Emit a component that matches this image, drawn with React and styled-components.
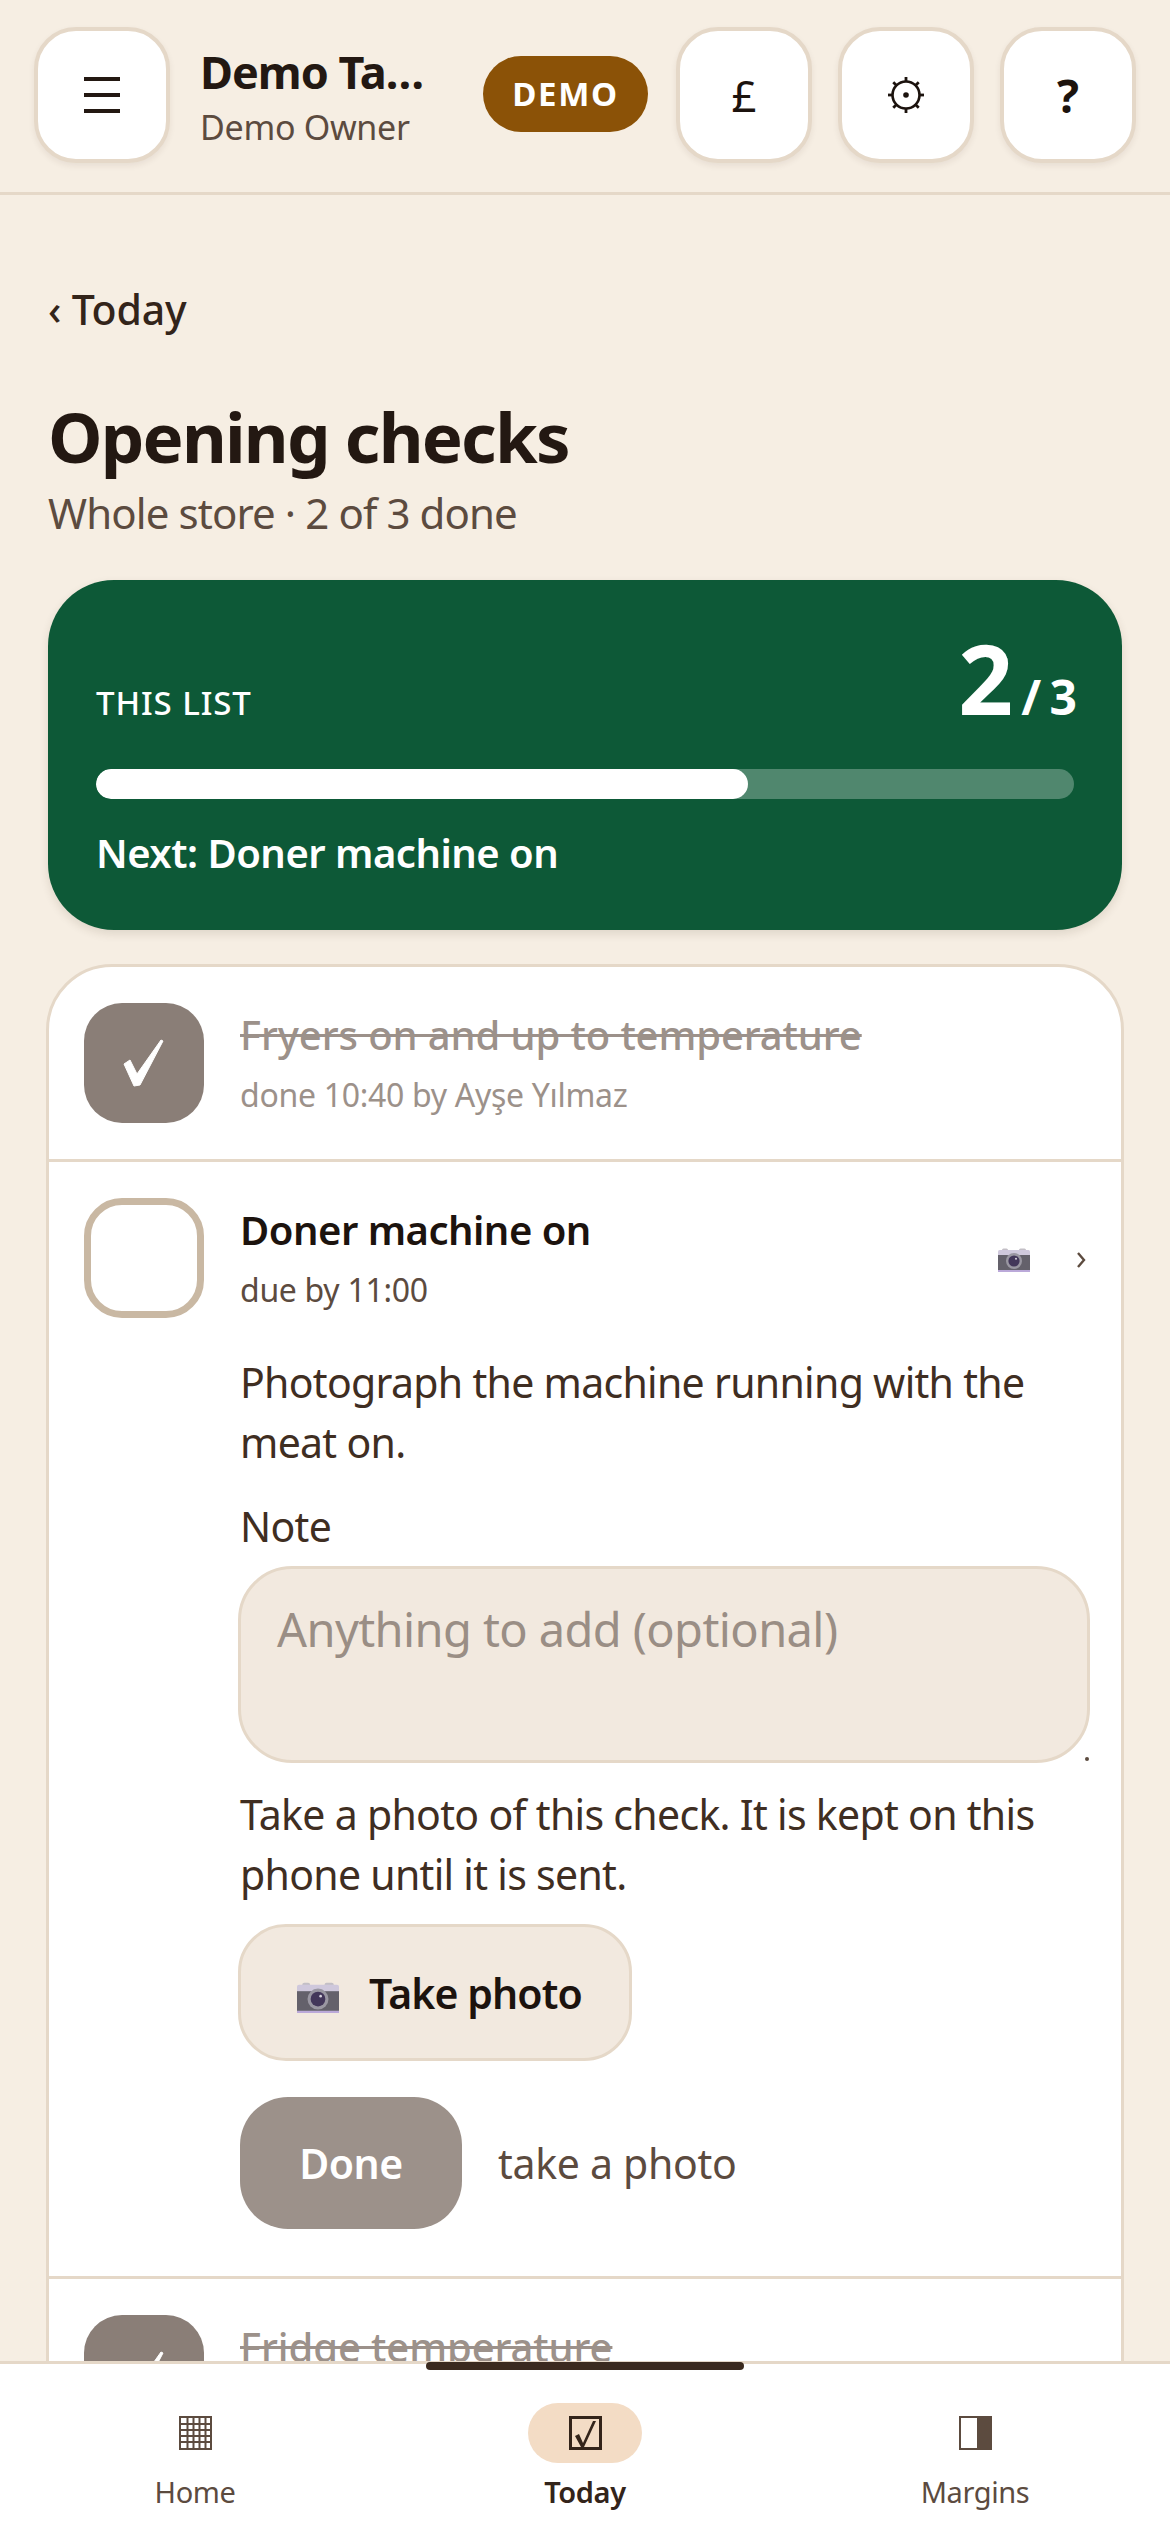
import styled, { createGlobalStyle } from "styled-components"

const GlobalStyle = createGlobalStyle`
html, body {
  margin: 0;
  padding: 0;
  background: #f6eee3;
}
* { box-sizing: border-box; }
body {
  font-family: "Noto Sans", "Open Sans", sans-serif;
  color: #231812;
  overflow: hidden;
}
`

const Screen = styled.div`
height: 2532px;
width: 1170px;
display: flex;
flex-direction: column;
overflow: hidden;
`
const Header = styled.header`
flex: none;
height: 195px;
display: flex;
align-items: center;
padding: 0 34px 2px 34px;
border-bottom: 3px solid #e5d8c8;
`
const IconButton = styled.div`
flex: none;
width: 136px;
height: 136px;
margin-left: ${props => props.gap || 0}px;
background: #fff;
border: 4px solid #e5d8c8;
border-radius: 42px;
box-shadow: 0 3px 6px rgba(60, 40, 20, 0.08);
display: flex;
align-items: center;
justify-content: center;
font-size: ${props => props.size || 48}px;
font-weight: ${props => props.weight || 400};
color: #1c130e;
`
const Brand = styled.div`
flex: 1;
min-width: 0;
margin: 2px 54px 0 30px;
`
const BrandName = styled.div`
font-size: 45px;
line-height: 60px;
font-weight: 700;
letter-spacing: -1px;
white-space: nowrap;
overflow: hidden;
text-overflow: ellipsis;
`
const BrandOwner = styled.div`
margin-top: 2px;
font-size: 34px;
line-height: 46px;
color: #5c4b3f;
letter-spacing: -0.3px;
`
const Badge = styled.div`
flex: none;
width: 165px;
height: 76px;
margin-bottom: 3px;
border-radius: 38px;
background: #8b5207;
color: #fff;
font-size: 33px;
font-weight: 700;
letter-spacing: 1.6px;
display: flex;
align-items: center;
justify-content: center;
`
const Main = styled.main`
flex: 1;
min-height: 0;
overflow: hidden;
padding: 84px 48px 0;
`
const Back = styled.div`
font-size: 41px;
line-height: 60px;
font-weight: 500;
color: #33241a;
letter-spacing: -0.2px;
`
const Title = styled.h1`
margin: 53px 0 0;
font-size: 69px;
line-height: 88px;
font-weight: 700;
letter-spacing: -1.8px;
color: #231812;
`
const Subtitle = styled.div`
margin-top: 3px;
font-size: 42px;
line-height: 60px;
color: #5c4b3f;
letter-spacing: -0.9px;
`
const Summary = styled.section`
margin-top: 37px;
height: 350px;
border-radius: 66px;
background: #0d5937;
color: #fff;
padding: 30px 48px 0;
box-shadow: 0 4px 10px rgba(60, 40, 20, 0.12);
`
const SummaryTop = styled.div`
height: 126px;
display: flex;
align-items: flex-end;
justify-content: space-between;
`
const SummaryLabel = styled.div`
padding-bottom: 8px;
font-size: 33px;
line-height: 50px;
font-weight: 500;
letter-spacing: 0.9px;
`
const Count = styled.div`
margin-right: -3px;
font-size: 48px;
line-height: 78px;
font-weight: 700;
white-space: nowrap;
word-spacing: -4px;
`
const CountBig = styled.span`
font-size: 96px;
margin-right: 8px;
`
const Track = styled.div`
margin-top: 33px;
height: 30px;
border-radius: 15px;
background: rgba(255, 255, 255, 0.28);
overflow: hidden;
`
const Fill = styled.div`
height: 100%;
border-radius: 15px;
background: #fff;
`
const NextUp = styled.div`
margin-top: 24px;
font-size: 40px;
line-height: 60px;
font-weight: 600;
letter-spacing: -0.5px;
`
const ListCard = styled.section`
margin: 34px -2px 0;
background: #fff;
border: 3px solid #e5d8c8;
border-radius: 66px 66px 0 0;
`
const Row = styled.div`
display: flex;
gap: 36px;
padding: 36px 33px ${props => (props.tall ? 47 : 36)}px 35px;
border-bottom: ${props => (props.last ? "none" : "3px solid #e5d8c8")};
`
const Box = styled.div`
flex: none;
width: 120px;
height: 120px;
border-radius: 38px;
display: flex;
align-items: center;
justify-content: center;
background: ${props => (props.done ? "#8a7e77" : "#fff")};
border: ${props => (props.done ? "none" : "7px solid #c9b8a3")};
`
const RowBody = styled.div`
flex: 1;
min-width: 0;
`
const RowHead = styled.div`
display: flex;
align-items: center;
`
const RowText = styled.div`
flex: 1;
min-width: 0;
`
const RowTitle = styled.div`
padding-top: 4px;
font-size: 40px;
line-height: 56px;
font-weight: ${props => (props.done ? 500 : 600)};
letter-spacing: ${props => (props.done ? -0.1 : -0.5)}px;
color: ${props => (props.done ? "#9c918a" : "#1c130e")};
text-decoration: ${props => (props.done ? "line-through" : "none")};
text-decoration-thickness: 3px;
`
const RowMeta = styled.div`
margin-top: 8px;
font-size: 32px;
line-height: 48px;
letter-spacing: -0.3px;
color: ${props => (props.done ? "#9c918a" : "#5c4b3f")};
`
const RowGlyphs = styled.div`
display: flex;
align-items: center;
margin-top: 8px;
`
const Chevron = styled.span`
margin-left: 46px;
margin-right: 2px;
display: flex;
`
const Copy = styled.p`
margin: ${props => props.top || 0}px 0 0;
font-size: 41px;
line-height: 60px;
letter-spacing: -0.7px;
color: #3f2e22;
`
const NoteWrap = styled.div`
position: relative;
margin: 10px -2px 0;
`
const NoteBox = styled.div`
height: 197px;
padding: 28px 36px;
background: #f2e9df;
border: 3px solid #e5d8c8;
border-radius: 54px;
font-size: 47px;
line-height: 64px;
letter-spacing: -0.6px;
color: #9a8e85;
`
const Grip = styled.div`
position: absolute;
right: 1px;
bottom: 2px;
width: 4px;
height: 4px;
border-radius: 50%;
background: #5c4b3f;
`
const PhotoButton = styled.div`
margin: 20px 0 0 -2px;
width: 394px;
height: 137px;
display: flex;
align-items: center;
gap: 30px;
padding-left: 56px;
background: #f2e9df;
border: 3px solid #e5d8c8;
border-radius: 48px;
font-size: 41px;
font-weight: 600;
letter-spacing: -0.9px;
color: #1c130e;
`
const PhotoGlyph = styled.span`
display: flex;
margin-top: 10px;
`
const DoneRow = styled.div`
margin-top: 36px;
display: flex;
align-items: center;
gap: 36px;
`
const DoneButton = styled.div`
width: 222px;
height: 132px;
border-radius: 48px;
background: #9c918a;
color: #fff;
font-size: 41px;
font-weight: 600;
letter-spacing: -0.5px;
display: flex;
align-items: center;
justify-content: center;
`
const DoneHint = styled.div`
font-size: 41px;
letter-spacing: -0.3px;
color: #5c4b3f;
`
const Nav = styled.nav`
flex: none;
position: relative;
height: 171px;
background: #fff;
border-top: 3px solid #e5d8c8;
display: grid;
grid-template-columns: repeat(3, 1fr);
`
const HomeBar = styled.div`
position: absolute;
top: -2px;
left: 426px;
width: 318px;
height: 8px;
border-radius: 4px;
background: #3a2a1f;
`
const Tab = styled.div`
display: flex;
flex-direction: column;
align-items: center;
padding-top: 39px;
color: ${props => (props.active ? "#33241a" : "#5c4b3f")};
`
const TabIcon = styled.div`
width: 114px;
height: 60px;
border-radius: 30px;
display: flex;
align-items: center;
justify-content: center;
background: ${props => (props.active ? "#f3dcc5" : "transparent")};
`
const TabLabel = styled.div`
margin-top: 8px;
font-size: 29px;
line-height: 42px;
font-weight: ${props => (props.active ? 600 : 400)};
letter-spacing: -0.4px;
`

function Camera({ w = 32 }) {
    return (
        <svg width={w} height={w * 0.75} viewBox="0 0 32 24">
            <rect x="4" y="0.5" width="6" height="3" rx="1.5" fill="#c3bfc6" />
            <rect x="21" y="0.5" width="7" height="3" rx="1.5" fill="#c3bfc6" />
            <rect x="0" y="2" width="32" height="22" rx="1.5" fill="#cfc8dc" />
            <rect x="0" y="7" width="32" height="15" fill="#64616b" />
            <rect x="0" y="22" width="32" height="2" fill="#bba9d9" />
            <circle cx="16" cy="13" r="8" fill="#9a97a2" />
            <circle cx="16" cy="13" r="5.6" fill="#43375a" />
            <circle cx="18" cy="10.8" r="1" fill="#d8d4e0" />
        </svg>
    )
}

function Tick() {
    return (
        <svg width="44" height="50" viewBox="0 0 44 50">
            <path d="M2 26 L8 22 L15 36 L39 2 L41 3 L18 47 L12 48Z" fill="#fff" stroke="#fff" strokeWidth="1" strokeLinejoin="round" />
        </svg>
    )
}

function Menu() {
    return (
        <svg width="36" height="36" viewBox="0 0 36 36">
            <path d="M0 2h36M0 18h36M0 34h36" stroke="#231812" strokeWidth="4" />
        </svg>
    )
}

function Gear() {
    const teeth = [0, 45, 90, 135, 180, 225, 270, 315]
    return (
        <svg width="38" height="38" viewBox="0 0 38 38">
            <circle cx="19" cy="19" r="13.5" fill="none" stroke="#1c130e" strokeWidth="2.6" />
            <circle cx="19" cy="19" r="2.8" fill="#1c130e" />
            {teeth.map(a => (
                <rect key={a} x="17.6" y="1" width="2.8" height="5" fill="#1c130e" transform={`rotate(${a} 19 19)`} />
            ))}
        </svg>
    )
}

function GridIcon() {
    const lines = [7, 13, 19, 25]
    return (
        <svg width="33" height="34" viewBox="0 0 33 34">
            <rect x="1" y="1" width="31" height="32" fill="#fff" stroke="#5c4b3f" strokeWidth="2" />
            {lines.map(v => <rect key={"v" + v} x={v + 0.5} y="1" width="2" height="32" fill="#5c4b3f" />)}
            {lines.map(v => <rect key={"h" + v} x="1" y={v} width="31" height="2" fill="#5c4b3f" />)}
        </svg>
    )
}

function CheckIcon() {
    return (
        <svg width="33" height="34" viewBox="0 0 33 34">
            <rect x="1.5" y="1.5" width="30" height="31" fill="none" stroke="#33241a" strokeWidth="3" />
            <path d="M6 20 L10 18 L14 27 L24 5 L27 5 L15 31 L12 31Z" fill="#33241a" />
        </svg>
    )
}

function SplitIcon() {
    return (
        <svg width="33" height="34" viewBox="0 0 33 34">
            <rect x="1" y="1" width="31" height="32" fill="#fff" stroke="#5c4b3f" strokeWidth="2" />
            <rect x="18" y="1" width="14" height="32" fill="#5c4b3f" />
        </svg>
    )
}

export default function App() {
    return (
        <Screen>
            <GlobalStyle />
            <Header>
                <IconButton><Menu /></IconButton>
                <Brand>
                    <BrandName>Demo Takeaway</BrandName>
                    <BrandOwner>Demo Owner</BrandOwner>
                </Brand>
                <Badge>DEMO</Badge>
                <IconButton gap={28} size={44}>£</IconButton>
                <IconButton gap={26}><Gear /></IconButton>
                <IconButton gap={26} size={46} weight={700}>?</IconButton>
            </Header>
            <Main>
                <Back>‹ Today</Back>
                <Title>Opening checks</Title>
                <Subtitle>Whole store · 2 of 3 done</Subtitle>
                <Summary>
                    <SummaryTop>
                        <SummaryLabel>THIS LIST</SummaryLabel>
                        <Count><CountBig>2</CountBig>/ 3</Count>
                    </SummaryTop>
                    <Track><Fill style={{ width: `${(2 / 3) * 100}%` }} /></Track>
                    <NextUp>Next: Doner machine on</NextUp>
                </Summary>
                <ListCard>
                    <Row>
                        <Box done><Tick /></Box>
                        <RowBody>
                            <RowTitle done>Fryers on and up to temperature</RowTitle>
                            <RowMeta done>done 10:40 by Ayşe Yılmaz</RowMeta>
                        </RowBody>
                    </Row>
                    <Row tall>
                        <Box />
                        <RowBody>
                            <RowHead>
                                <RowText>
                                    <RowTitle>Doner machine on</RowTitle>
                                    <RowMeta>due by 11:00</RowMeta>
                                </RowText>
                                <RowGlyphs>
                                    <Camera />
                                    <Chevron>
                                        <svg width="10" height="18" viewBox="0 0 10 18">
                                            <path d="M2 2 L8 9 L2 16" fill="none" stroke="#5c4b3f" strokeWidth="2.4" />
                                        </svg>
                                    </Chevron>
                                </RowGlyphs>
                            </RowHead>
                            <Copy top={38}>Photograph the machine running with the meat on.</Copy>
                            <Copy top={24}>Note</Copy>
                            <NoteWrap>
                                <NoteBox>Anything to add (optional)</NoteBox>
                                <Grip />
                            </NoteWrap>
                            <Copy top={21}>Take a photo of this check. It is kept on this phone until it is sent.</Copy>
                            <PhotoButton><PhotoGlyph><Camera w={42} /></PhotoGlyph>Take photo</PhotoButton>
                            <DoneRow>
                                <DoneButton>Done</DoneButton>
                                <DoneHint>take a photo</DoneHint>
                            </DoneRow>
                        </RowBody>
                    </Row>
                    <Row last>
                        <Box done><Tick /></Box>
                        <RowBody>
                            <RowTitle done>Fridge temperature</RowTitle>
                        </RowBody>
                    </Row>
                </ListCard>
            </Main>
            <Nav>
                <HomeBar />
                <Tab>
                    <TabIcon><GridIcon /></TabIcon>
                    <TabLabel>Home</TabLabel>
                </Tab>
                <Tab active>
                    <TabIcon active><CheckIcon /></TabIcon>
                    <TabLabel active>Today</TabLabel>
                </Tab>
                <Tab>
                    <TabIcon><SplitIcon /></TabIcon>
                    <TabLabel>Margins</TabLabel>
                </Tab>
            </Nav>
        </Screen>
    )
}
